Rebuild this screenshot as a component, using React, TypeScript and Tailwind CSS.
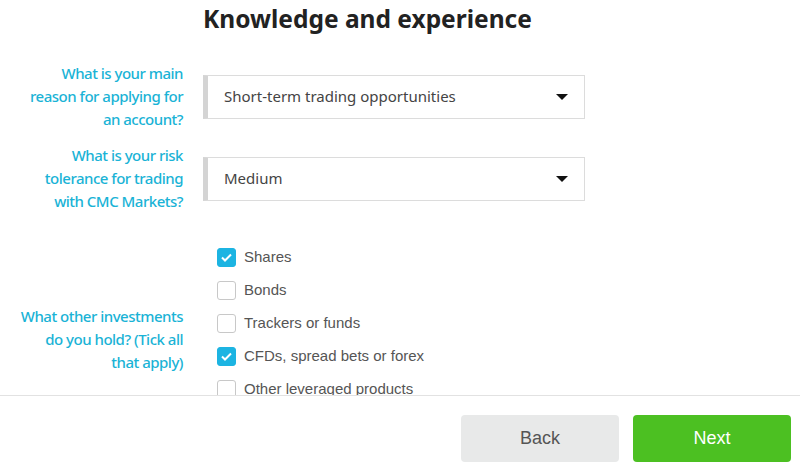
import { useState } from 'react';

const investments = [
  { label: 'Shares', checked: true },
  { label: 'Bonds', checked: false },
  { label: 'Trackers or funds', checked: false },
  { label: 'CFDs, spread bets or forex', checked: true },
  { label: 'Other leveraged products', checked: false },
];

function Select({ value }: { value: string }) {
  return (
    <div className="flex h-[44px] w-[382px] items-center border border-[#dcdcdc] border-l-[5px] border-l-[#d4d4d4] bg-white pl-[16px] pr-[14px]">
      <span className="flex-1 text-[15px] text-[#444] font-['Noto_Sans',sans-serif]">{value}</span>
      <svg width="12" height="6" viewBox="0 0 12 6" className="mr-[2px]">
        <path d="M0 0h12L6 6z" fill="#111" />
      </svg>
    </div>
  );
}

function Label({ children, className = '' }: { children: React.ReactNode; className?: string }) {
  return (
    <div
      className={`w-[183px] shrink-0 text-right text-[15px] leading-[23px] font-medium text-[#1ab3d6] font-['Noto_Sans',sans-serif] tracking-[-0.5px] ${className}`}
    >
      {children}
    </div>
  );
}

export default function App() {
  const [items, setItems] = useState(investments);

  return (
    <div className="flex h-[472px] w-[800px] flex-col bg-white">
      <div className="flex-1 overflow-hidden">
        <h1 className="ml-[203px] pt-[2px] text-[24.5px] leading-[34px] font-bold text-[#222] font-['Noto_Sans',sans-serif]">
          Knowledge and experience
        </h1>

        <div className="mt-[26px] flex items-center gap-[20px]">
          <Label>
            What is your main
            <br />
            reason for applying for
            <br />
            an account?
          </Label>
          <Select value="Short-term trading opportunities" />
        </div>

        <div className="mt-[13px] flex items-center gap-[20px]">
          <Label>
            What is your risk
            <br />
            tolerance for trading
            <br />
            with CMC Markets?
          </Label>
          <Select value="Medium" />
        </div>

        <div className="mt-[28px] flex items-start gap-[20px]">
          <Label className="mt-[64px]">
            What other investments
            <br />
            do you hold? (Tick all
            <br />
            that apply)
          </Label>
          <div className="flex flex-col pl-[14px]">
            {items.map((it, i) => (
              <label key={it.label} className="flex h-[33px] cursor-pointer items-center gap-[8px]">
                <span
                  onClick={() =>
                    setItems(items.map((x, j) => (j === i ? { ...x, checked: !x.checked } : x)))
                  }
                  className={`flex h-[19px] w-[19px] items-center justify-center rounded-[3px] border ${
                    it.checked ? 'border-[#1cb4e2] bg-[#1cb4e2]' : 'border-[#c8c8c8] bg-white'
                  }`}
                >
                  {it.checked && (
                    <svg width="11" height="9" viewBox="0 0 11 9">
                      <path d="M1 4.5l3 3L10 1.5" stroke="#fff" strokeWidth="2" fill="none" />
                    </svg>
                  )}
                </span>
                <span className="text-[15px] text-[#555] font-['Liberation_Sans',Arial,sans-serif]">{it.label}</span>
              </label>
            ))}
          </div>
        </div>
      </div>

      <div className="flex h-[77px] items-end justify-end gap-[14px] border-t border-[#e2e2e2] pb-[10px] pr-[9px]">
        <button className="h-[47px] w-[158px] rounded-[4px] bg-[#e8e9e9] text-[18px] text-[#555] font-['Liberation_Sans',Arial,sans-serif]">
          Back
        </button>
        <button className="h-[47px] w-[158px] rounded-[4px] bg-[#4cc022] text-[18px] text-white font-['Liberation_Sans',Arial,sans-serif]">
          Next
        </button>
      </div>
    </div>
  );
}
